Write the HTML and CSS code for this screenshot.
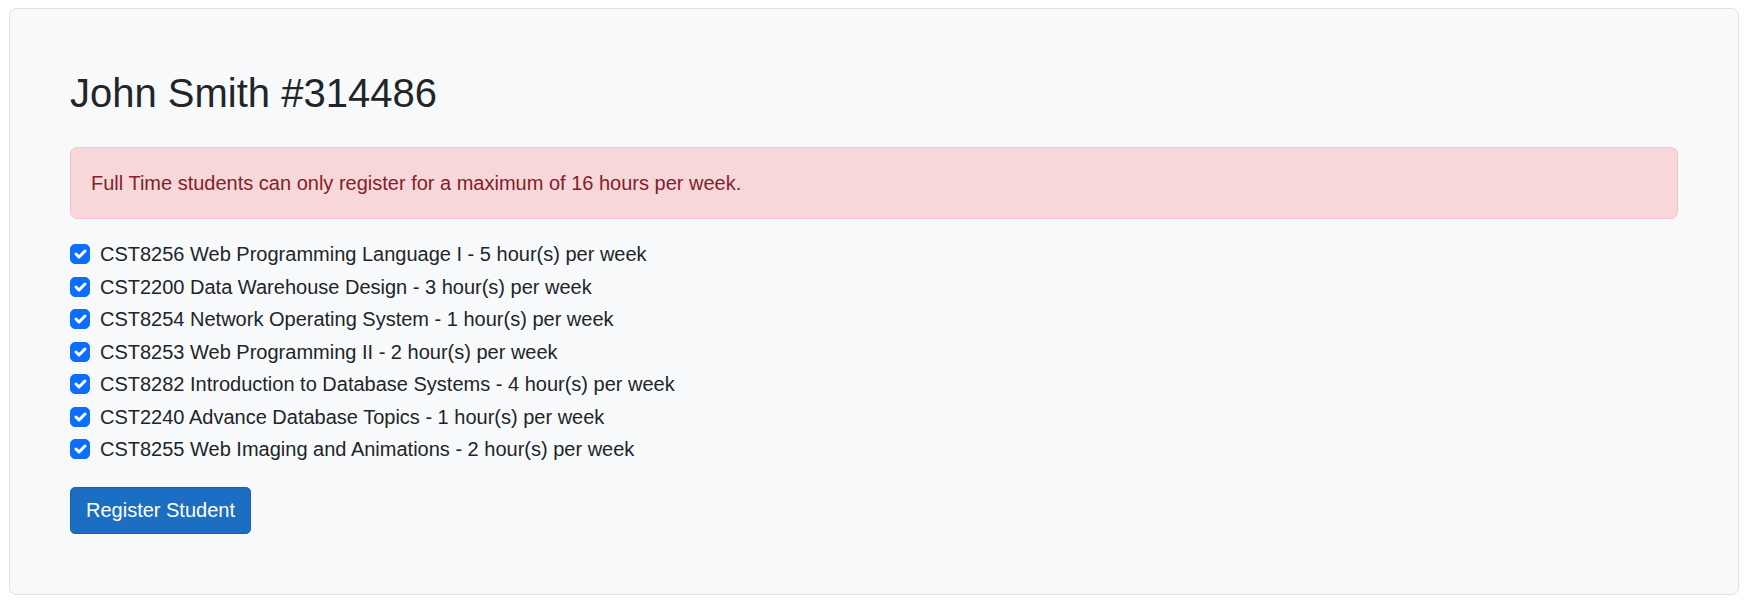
FILE: index.html
```html
<!DOCTYPE html>
<html lang="en">
<head>
<meta charset="utf-8">
<title>Register Student</title>
<link rel="stylesheet" href="styles.css">
</head>
<body>
<div class="card">
  <h2 class="title">John Smith #314486</h2>
  <div class="alert">Full Time students can only register for a maximum of 16 hours per week.</div>
  <div class="checks">
    <label class="check-row"><span class="box"><svg viewBox="0 0 20 20" width="20" height="20"><path d="m6 10 3 3 6-6" fill="none" stroke="#fff" stroke-width="3" stroke-linecap="round" stroke-linejoin="round"/></svg></span>CST8256 Web Programming Language I - 5 hour(s) per week</label>
    <label class="check-row"><span class="box"><svg viewBox="0 0 20 20" width="20" height="20"><path d="m6 10 3 3 6-6" fill="none" stroke="#fff" stroke-width="3" stroke-linecap="round" stroke-linejoin="round"/></svg></span>CST2200 Data Warehouse Design - 3 hour(s) per week</label>
    <label class="check-row"><span class="box"><svg viewBox="0 0 20 20" width="20" height="20"><path d="m6 10 3 3 6-6" fill="none" stroke="#fff" stroke-width="3" stroke-linecap="round" stroke-linejoin="round"/></svg></span>CST8254 Network Operating System - 1 hour(s) per week</label>
    <label class="check-row"><span class="box"><svg viewBox="0 0 20 20" width="20" height="20"><path d="m6 10 3 3 6-6" fill="none" stroke="#fff" stroke-width="3" stroke-linecap="round" stroke-linejoin="round"/></svg></span>CST8253 Web Programming II - 2 hour(s) per week</label>
    <label class="check-row"><span class="box"><svg viewBox="0 0 20 20" width="20" height="20"><path d="m6 10 3 3 6-6" fill="none" stroke="#fff" stroke-width="3" stroke-linecap="round" stroke-linejoin="round"/></svg></span>CST8282 Introduction to Database Systems - 4 hour(s) per week</label>
    <label class="check-row"><span class="box"><svg viewBox="0 0 20 20" width="20" height="20"><path d="m6 10 3 3 6-6" fill="none" stroke="#fff" stroke-width="3" stroke-linecap="round" stroke-linejoin="round"/></svg></span>CST2240 Advance Database Topics - 1 hour(s) per week</label>
    <label class="check-row"><span class="box"><svg viewBox="0 0 20 20" width="20" height="20"><path d="m6 10 3 3 6-6" fill="none" stroke="#fff" stroke-width="3" stroke-linecap="round" stroke-linejoin="round"/></svg></span>CST8255 Web Imaging and Animations - 2 hour(s) per week</label>
  </div>
  <button class="btn" type="button">Register Student</button>
</div>
</body>
</html>
```
FILE: styles.css
```css
* { box-sizing: border-box; }
html, body { background: #ffffff; }
body {
  margin: 8px 7px 8px 9px;
  font-family: "Liberation Sans", Arial, Helvetica, sans-serif;
  font-size: 20px;
  line-height: 1.5;
  color: #212529;
}
.card {
  background: #f8f9fa;
  border: 1px solid #dee2e6;
  border-radius: 7px;
  padding: 60px;
  display: flex;
  flex-direction: column;
  align-items: flex-start;
}
.title {
  margin: 0 0 10px 0;
  font-size: 40px;
  line-height: 1.2;
  font-weight: 400;
}
.alert {
  align-self: stretch;
  margin-top: 20px;
  margin-bottom: 20px;
  padding: 20px;
  background: #f8d7da;
  border: 1px solid #f5c2c7;
  border-radius: 7px;
  color: #842029;
}
.checks {
  display: flex;
  flex-direction: column;
}
.check-row {
  display: flex;
  align-items: flex-start;
  min-height: 30px;
  margin-bottom: 2.5px;
}
.box {
  flex: none;
  width: 20px;
  height: 20px;
  margin-top: 5px;
  margin-right: 10px;
  background: #0d6efd;
  border: 1px solid #0d6efd;
  border-radius: 5px;
  display: flex;
  align-items: center;
  justify-content: center;
}
.box svg { display: block; width: 20px; height: 20px; flex: none; }
.btn {
  margin-top: 20px;
  font-family: inherit;
  font-size: 20px;
  line-height: 1.5;
  color: #ffffff;
  background: #1b6ec2;
  border: 1px solid #1861ac;
  border-radius: 5px;
  padding: 7.5px 15px;
  cursor: pointer;
}
```
